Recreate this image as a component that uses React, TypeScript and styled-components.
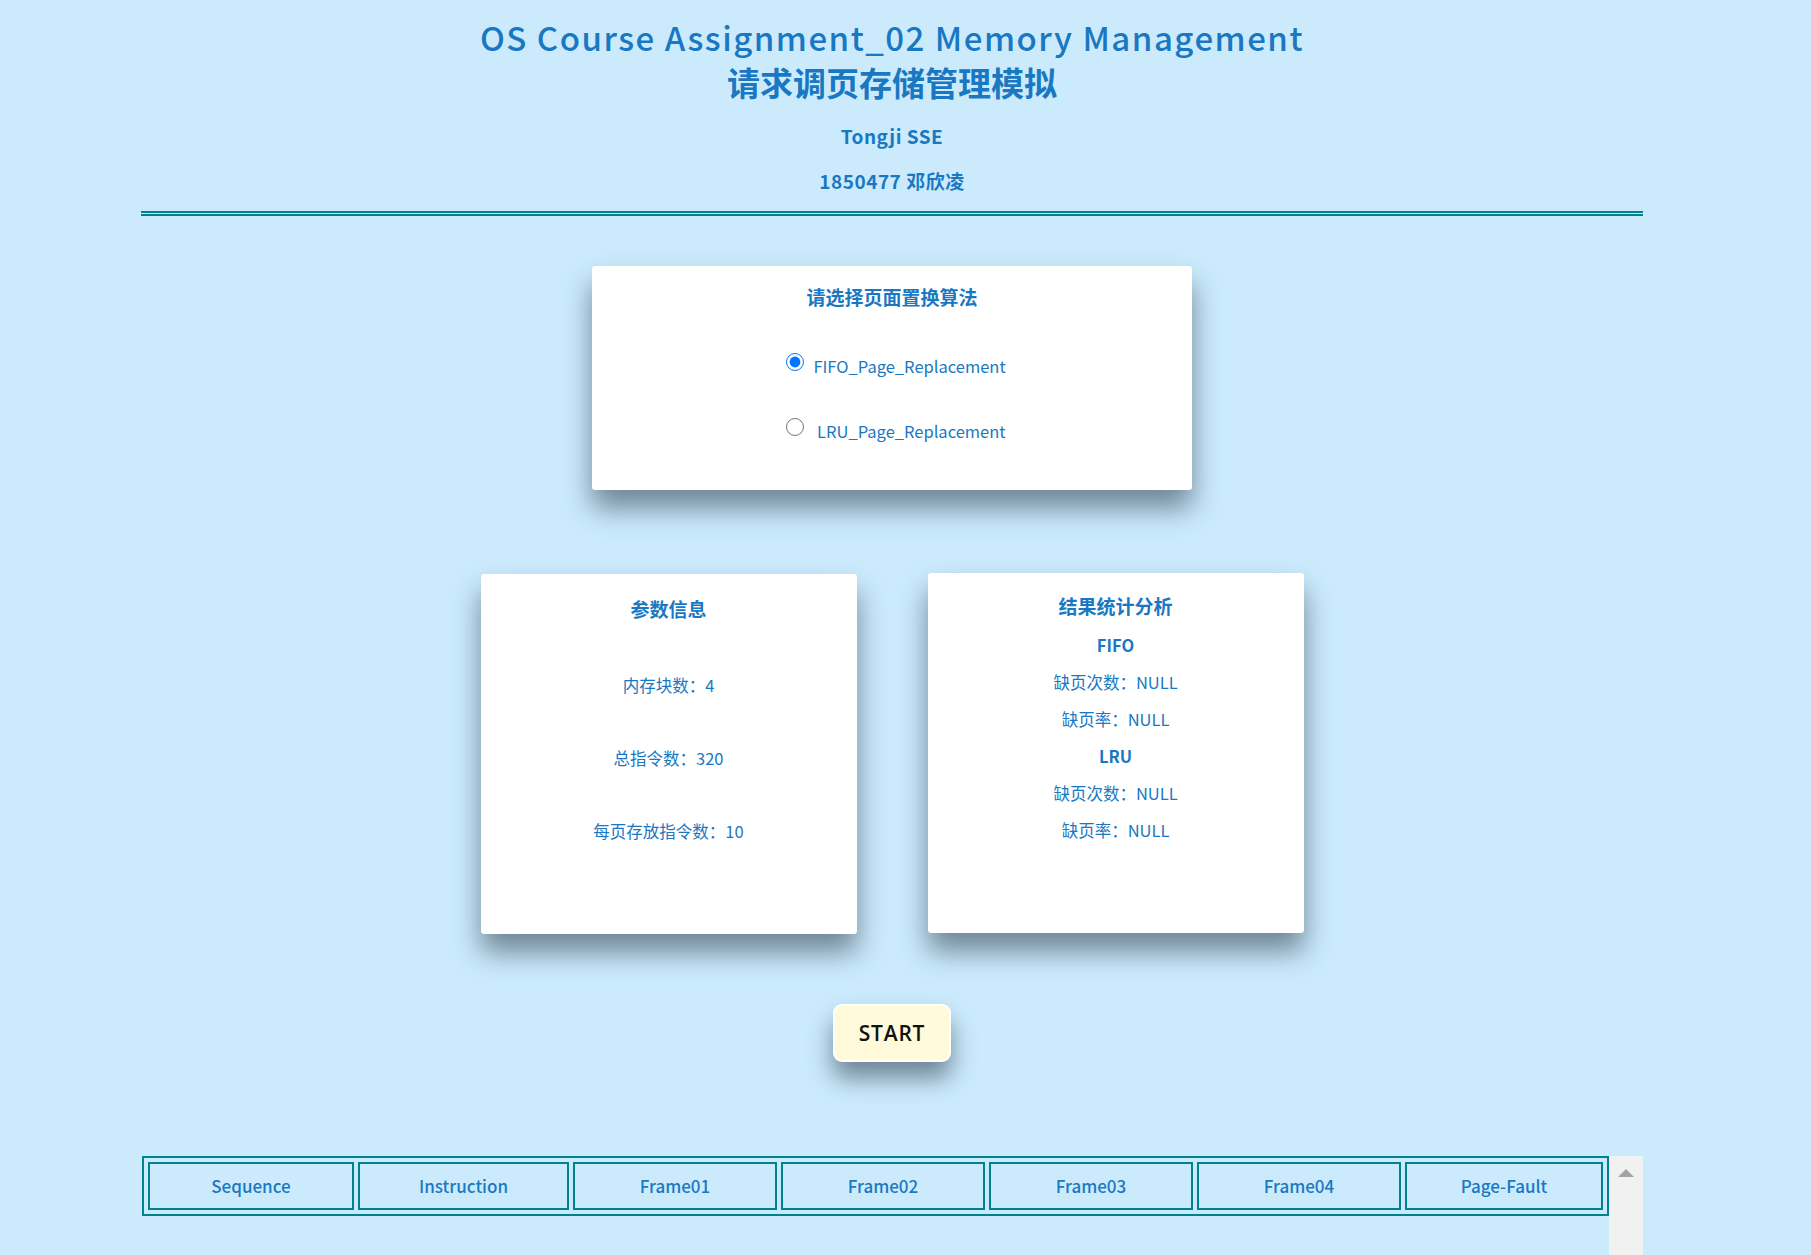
import React, { useState } from "react";
import styled, { createGlobalStyle } from "styled-components";

const GlobalStyle = createGlobalStyle`
  html, body {
    margin: 0;
    padding: 0;
    background: #cbebfd;
  }
  body {
    font-family: "Noto Sans CJK SC", "Noto Sans", sans-serif;
    color: #1a78c2;
    overflow: hidden;
  }
`;

const Page = styled.div`
  width: 1502px;
  margin-left: 141px;
  display: flex;
  flex-direction: column;
  align-items: center;
`;

const Title = styled.h1`
  margin: 15px 0 0;
  font-size: 33px;
  line-height: 45px;
  font-weight: 500;
  text-align: center;
  letter-spacing: 1.5px;
  span {
    display: block;
    font-size: 33px;
    font-weight: 700;
    letter-spacing: 0;
  }
`;

const SubLine = styled.p`
  margin: 0;
  font-size: 19px;
  line-height: 45px;
  font-weight: 700;
  text-align: center;
  letter-spacing: 0.5px;
  &:first-of-type {
    margin-top: 8px;
  }
`;

const Divider = styled.hr`
  align-self: stretch;
  margin: 8px 0 0;
  height: 0;
  border: none;
  border-top: 5px double #00838f;
`;

const Card = styled.div<{ $w: number; $h: number }>`
  width: ${(p) => p.$w}px;
  height: ${(p) => p.$h}px;
  box-sizing: border-box;
  background: #ffffff;
  border-radius: 3px;
  box-shadow: 0 18px 28px rgba(35, 50, 65, 0.55);
  display: flex;
  flex-direction: column;
  align-items: center;
`;

const AlgoCard = styled(Card)`
  margin-top: 50px;
  padding-top: 17px;
`;

const CardTitle = styled.h3`
  margin: 0;
  font-size: 19px;
  line-height: 28px;
  font-weight: 700;
`;

const RadioGroup = styled.div`
  margin-top: 38px;
  display: flex;
  flex-direction: column;
  gap: 36px;
  margin-left: 8px;
`;

const RadioRow = styled.label`
  display: flex;
  align-items: center;
  font-size: 16.5px;
  line-height: 24px;
  cursor: pointer;
  input {
    width: 18px;
    height: 18px;
    margin: 0 9px 3px 0;
    cursor: pointer;
  }
  span {
    padding-top: 5px;
  }
`;

const CardsRow = styled.div`
  margin-top: 83px;
  display: flex;
  gap: 71px;
  align-items: flex-start;
`;

const ParamCard = styled(Card)`
  padding-top: 21px;
  margin-top: 1px;
`;

const ParamList = styled.div`
  margin-top: 50px;
  display: flex;
  flex-direction: column;
  align-items: center;
  gap: 49px;
`;

const InfoLine = styled.div<{ $bold?: boolean }>`
  font-size: 16.5px;
  line-height: 24px;
  font-weight: ${(p) => (p.$bold ? 700 : 400)};
`;

const ResultCard = styled(Card)`
  padding-top: 19px;
`;

const ResultList = styled.div`
  margin-top: 7px;
  display: flex;
  flex-direction: column;
  align-items: center;
  ${InfoLine} {
    line-height: 37px;
  }
`;

const StartButton = styled.button`
  margin-top: 70px;
  width: 118px;
  height: 58px;
  box-sizing: border-box;
  background: #fffad9;
  border: 2px solid #ffffff;
  border-radius: 9px;
  font-family: "Open Sans", sans-serif;
  font-size: 21px;
  font-weight: 600;
  letter-spacing: 0.8px;
  color: #111111;
  box-shadow: 0 16px 24px rgba(35, 50, 65, 0.55);
  cursor: pointer;
`;

const TableArea = styled.div`
  align-self: stretch;
  margin-top: 94px;
  height: 99px;
  display: flex;
  overflow: hidden;
`;

const TableWrap = styled.div`
  flex: 1;
  padding-left: 1px;
`;

const Table = styled.table`
  border: 2px solid #00838f;
  border-spacing: 4px;
  table-layout: fixed;
  width: 1467px;
`;

const HeadCell = styled.th<{ $w: number }>`
  width: ${(p) => p.$w}px;
  box-sizing: border-box;
  height: 48px;
  border: 2px solid #00838f;
  font-size: 17px;
  font-weight: 500;
  color: #1a78c2;
  text-align: center;
  padding: 0 0 2px;
`;

const ScrollBar = styled.div`
  width: 34px;
  background: #f1f1f1;
  display: flex;
  justify-content: center;
  padding-top: 13px;
  box-sizing: border-box;
`;

const ArrowUp = styled.div`
  width: 0;
  height: 0;
  border-left: 8px solid transparent;
  border-right: 8px solid transparent;
  border-bottom: 8px solid #a3a3a3;
`;

const columns: [string, number][] = [
  ["Sequence", 206],
  ["Instruction", 211],
  ["Frame01", 204],
  ["Frame02", 204],
  ["Frame03", 204],
  ["Frame04", 204],
  ["Page-Fault", 198],
];

export default function App() {
  const [algo, setAlgo] = useState("FIFO");
  return (
    <>
      <GlobalStyle />
      <Page>
        <Title>
          OS Course Assignment_02 Memory Management
          <span>请求调页存储管理模拟</span>
        </Title>
        <SubLine>Tongji SSE</SubLine>
        <SubLine>1850477 邓欣凌</SubLine>
        <Divider />

        <AlgoCard $w={600} $h={224}>
          <CardTitle>请选择页面置换算法</CardTitle>
          <RadioGroup>
            <RadioRow>
              <input
                type="radio"
                name="algo"
                checked={algo === "FIFO"}
                onChange={() => setAlgo("FIFO")}
              />
              <span>FIFO_Page_Replacement</span>
            </RadioRow>
            <RadioRow>
              <input
                type="radio"
                name="algo"
                checked={algo === "LRU"}
                onChange={() => setAlgo("LRU")}
              />
              <span>&nbsp;LRU_Page_Replacement</span>
            </RadioRow>
          </RadioGroup>
        </AlgoCard>

        <CardsRow>
          <ParamCard $w={376} $h={360}>
            <CardTitle>参数信息</CardTitle>
            <ParamList>
              <InfoLine>内存块数：4</InfoLine>
              <InfoLine>总指令数：320</InfoLine>
              <InfoLine>每页存放指令数：10</InfoLine>
            </ParamList>
          </ParamCard>
          <ResultCard $w={376} $h={360}>
            <CardTitle>结果统计分析</CardTitle>
            <ResultList>
              <InfoLine $bold>FIFO</InfoLine>
              <InfoLine>缺页次数：NULL</InfoLine>
              <InfoLine>缺页率：NULL</InfoLine>
              <InfoLine $bold>LRU</InfoLine>
              <InfoLine>缺页次数：NULL</InfoLine>
              <InfoLine>缺页率：NULL</InfoLine>
            </ResultList>
          </ResultCard>
        </CardsRow>

        <StartButton>START</StartButton>

        <TableArea>
          <TableWrap>
            <Table>
              <thead>
                <tr>
                  {columns.map(([name, w]) => (
                    <HeadCell key={name} $w={w}>
                      {name}
                    </HeadCell>
                  ))}
                </tr>
              </thead>
            </Table>
          </TableWrap>
          <ScrollBar>
            <ArrowUp />
          </ScrollBar>
        </TableArea>
      </Page>
    </>
  );
}
